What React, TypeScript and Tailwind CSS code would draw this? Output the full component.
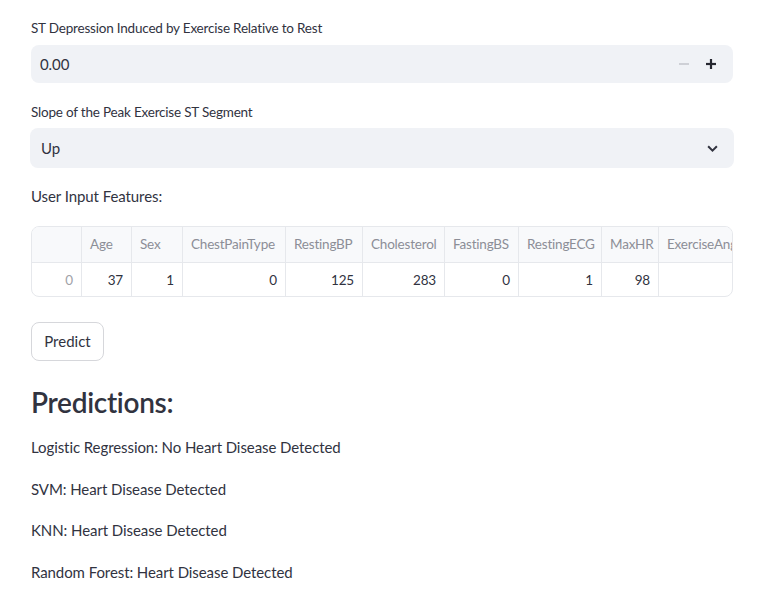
import React from "react";

const cols = [
  { name: "", w: 50, v: "0", idx: true },
  { name: "Age", w: 50, v: "37" },
  { name: "Sex", w: 51, v: "1" },
  { name: "ChestPainType", w: 103, v: "0" },
  { name: "RestingBP", w: 77, v: "125" },
  { name: "Cholesterol", w: 82, v: "283" },
  { name: "FastingBS", w: 74, v: "0" },
  { name: "RestingECG", w: 83, v: "1" },
  { name: "MaxHR", w: 57, v: "98" },
  { name: "ExerciseAngina", w: 110, v: "" },
];

export default function App() {
  return (
    <div
      className="w-[760px] h-[610px] bg-white text-[#31333F] px-[31px] pt-[18px] overflow-hidden"
      style={{ fontFamily: "Lato, 'Open Sans', sans-serif" }}
    >
      <div className="text-[13.5px] tracking-[-0.2px] leading-[20px] h-[20px]">ST Depression Induced by Exercise Relative to Rest</div>
      <div className="mt-[7px] h-[38px] w-[702px] rounded-[8px] bg-[#F0F2F6] flex items-center pl-[9px] pr-[10px]">
        <span className="flex-1 text-[15px] tracking-[-0.08px]">0.00</span>
        <span className="w-[30px] flex justify-center">
          <svg width="10" height="10" viewBox="0 0 10 10"><rect x="0" y="4.2" width="10" height="1.6" fill="#C6C8CE" /></svg>
        </span>
        <span className="w-[24px] flex justify-center">
          <svg width="10" height="10" viewBox="0 0 10 10"><rect x="0" y="3.9" width="10" height="2.2" fill="#262730" /><rect x="3.9" y="0" width="2.2" height="10" fill="#262730" /></svg>
        </span>
      </div>

      <div className="mt-[19px] text-[13.5px] tracking-[-0.2px] leading-[20px] h-[20px]">Slope of the Peak Exercise ST Segment</div>
      <div className="mt-[6px] h-[40px] w-[704px] -ml-[1px] rounded-[8px] bg-[#F0F2F6] flex items-center pl-[11px] pr-[14px]">
        <span className="flex-1 text-[15px] tracking-[-0.08px]">Up</span>
        <svg width="15" height="15" viewBox="0 0 24 24"><path d="M5 8.5l7 7 7-7" fill="none" stroke="#31333F" strokeWidth="3.2" /></svg>
      </div>

      <div className="mt-[16px] text-[15px] tracking-[-0.08px] leading-[24px]">User Input Features:</div>

      <div className="mt-[18px] w-[702px] h-[71px] rounded-[8px] border border-[#E6E8EC] overflow-hidden">
        <div className="flex h-[36px] bg-[#F8F9FB] border-b border-[#E6E8EC] w-max">
          {cols.map((c, i) => (
            <div
              key={i}
              className="shrink-0 h-full flex items-center px-[8px] text-[13.5px] tracking-[-0.2px] text-[#8C8E97] border-r border-[#E6E8EC] whitespace-nowrap"
              style={{ width: c.w }}
            >
              {c.name}
            </div>
          ))}
        </div>
        <div className="flex h-[34px] w-max">
          {cols.map((c, i) => (
            <div
              key={i}
              className={`shrink-0 h-full flex items-center justify-end px-[8px] text-[13.5px] tracking-[-0.2px] border-r border-[#E6E8EC] ${c.idx ? "text-[#A0A2A8]" : "text-[#31333F]"}`}
              style={{ width: c.w }}
            >
              {c.v}
            </div>
          ))}
        </div>
      </div>

      <button className="mt-[25px] h-[39px] w-[73px] rounded-[8px] border border-[#D6D7DB] bg-white text-[15px] text-[#31333F] flex items-center justify-center">
        Predict
      </button>

      <div className="mt-[24px] text-[28px] tracking-[-0.3px] leading-[34px] font-semibold">Predictions:</div>

      <div className="mt-[16px] flex flex-col gap-[17.6px] text-[15px] tracking-[-0.08px] leading-[24px]">
        <div>Logistic Regression: No Heart Disease Detected</div>
        <div>SVM: Heart Disease Detected</div>
        <div>KNN: Heart Disease Detected</div>
        <div>Random Forest: Heart Disease Detected</div>
      </div>
    </div>
  );
}
